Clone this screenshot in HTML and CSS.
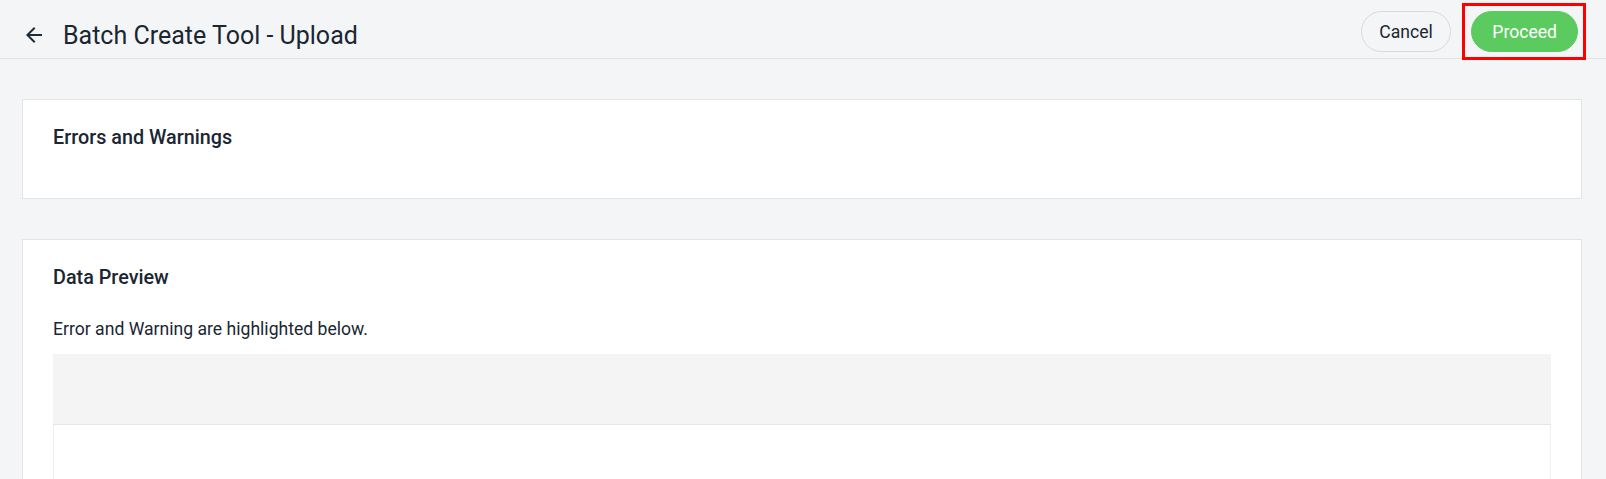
FILE: index.html
```html
<!DOCTYPE html>
<html lang="en">
<head>
<meta charset="utf-8">
<title>Batch Create Tool - Upload</title>
<link rel="stylesheet" href="styles.css">
</head>
<body>
<header class="topbar">
  <div class="topbar-left">
    <button class="back-btn" aria-label="Back">
      <svg width="24" height="24" viewBox="0 0 24 24"><path d="M20 11H7.83l5.59-5.59L12 4l-8 8 8 8 1.41-1.41L7.83 13H20v-2z" fill="#1f2b36"/></svg>
    </button>
    <h1 class="page-title">Batch Create Tool - Upload</h1>
  </div>
  <div class="topbar-actions">
    <button class="btn btn-outline">Cancel</button>
    <button class="btn btn-primary highlighted">Proceed</button>
  </div>
</header>
<main class="content">
  <section class="card card-errors">
    <h2 class="card-title">Errors and Warnings</h2>
  </section>
  <section class="card card-preview">
    <h2 class="card-title">Data Preview</h2>
    <p class="card-desc">Error and Warning are highlighted below.</p>
    <div class="table">
      <div class="table-head"></div>
      <div class="table-body"></div>
    </div>
  </section>
</main>
</body>
</html>
```
FILE: styles.css
```css
* { box-sizing: border-box; }
html, body { margin: 0; padding: 0; }
body {
  background: #f4f5f7;
  font-family: Roboto, "Liberation Sans", Arial, sans-serif;
  color: #1a2631;
  height: 479px;
  overflow: hidden;
}
.topbar {
  height: 59px;
  border-bottom: 1px solid #e1e3e6;
  display: flex;
  justify-content: space-between;
  align-items: flex-start;
  padding: 11px 28px 0 22px;
}
.topbar-left {
  display: flex;
  align-items: center;
  padding-top: 9px;
}
.back-btn {
  width: 24px;
  height: 24px;
  padding: 0;
  border: 0;
  background: transparent;
  display: flex;
  margin-top: -2px;
}
.page-title {
  margin: 0 0 0 17px;
  font-size: 25px;
  line-height: 32px;
  font-weight: 400;
  color: #1a2631;
}
.topbar-actions {
  display: flex;
  gap: 20px;
}
.btn {
  height: 41px;
  border-radius: 21px;
  font-family: inherit;
  font-size: 17.6px;
  line-height: 20px;
  cursor: pointer;
}
.btn-outline {
  background: transparent;
  border: 1px solid #d7d9dc;
  color: #1a2631;
  padding: 0 17.5px;
}
.btn-primary {
  background: #5ccb5f;
  border: 1px solid #5ccb5f;
  color: #fff;
  padding: 0 20px;
}
.highlighted { position: relative; }
.highlighted::after {
  content: "";
  position: absolute;
  left: -10px;
  right: -9px;
  top: -9px;
  bottom: -9px;
  border: 3px solid #ff0000;
}
.content {
  padding: 40px 24px 0 22px;
  display: flex;
  flex-direction: column;
  gap: 40px;
}
.card {
  background: #fff;
  border: 1px solid #e3e4e6;
  padding: 26px 30px 0 30px;
}
.card-errors { height: 100px; }
.card-title {
  margin: 0;
  font-size: 19.8px;
  line-height: 24px;
  font-weight: 500;
  color: #1a2631;
}
.card-preview .card-title { margin-bottom: 27px; }
.card-desc {
  margin: 0 0 13px;
  font-size: 17.6px;
  line-height: 24px;
  color: #1a2631;
}
.table-head {
  height: 71px;
  background: #f4f4f4;
  border-bottom: 1px solid #e6e6e6;
}
.table-body {
  height: 80px;
  border-left: 1px solid #f0f0f0;
  border-right: 1px solid #f0f0f0;
}
```
